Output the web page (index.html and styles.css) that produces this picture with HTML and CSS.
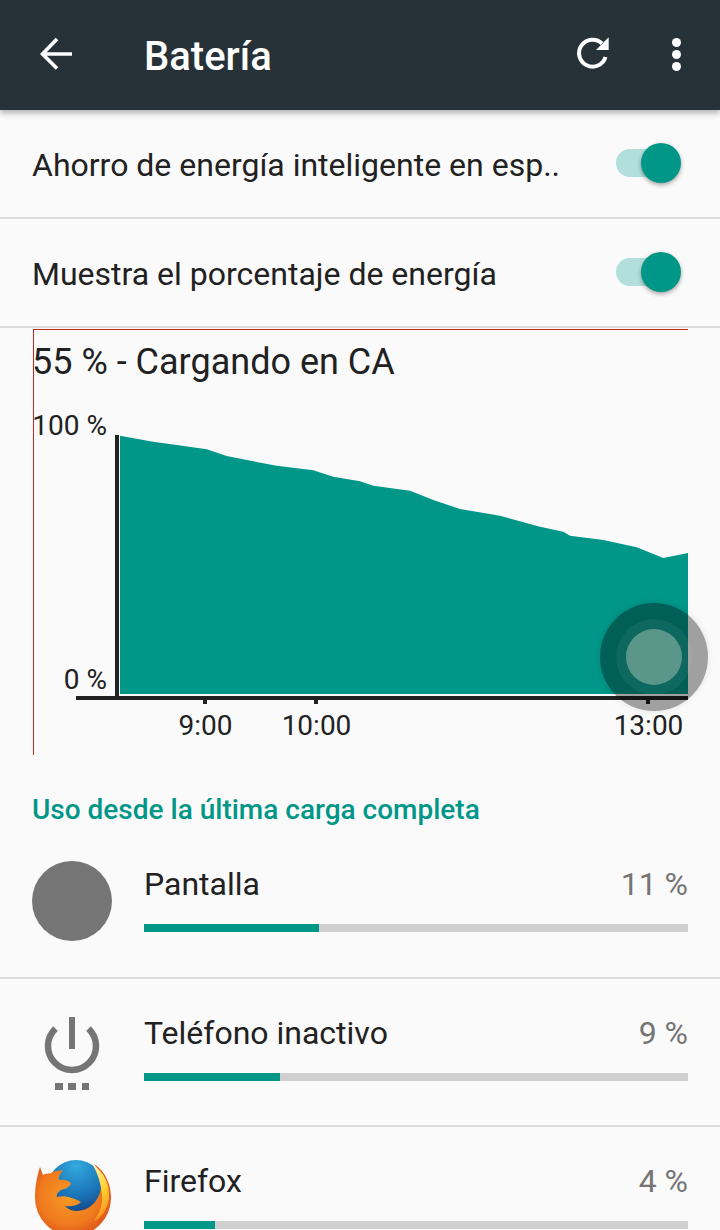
FILE: index.html
```html
<!DOCTYPE html>
<html lang="es">
<head>
    <meta charset="UTF-8" />
    <title>Batería</title>
    <link rel="stylesheet" href="styles.css">
</head>
<body>
    <header class="toolbar">
        <svg class="back-icon" viewBox="0 0 36 36"><path d="M33 18H4M18 3 3.500 18 18 32.500" fill="none" stroke="#fff" stroke-width="3.600"/></svg>
        <h1 class="toolbar-title">Batería</h1>
        <svg class="refresh-icon" viewBox="0 0 36 36"><path d="M27 7.500A13.500 13.500 0 1 0 30.500 21" fill="none" stroke="#fff" stroke-width="4"/><path d="M21 14 33.700 14 33.700 1.300z" fill="#fff"/></svg>
        <div class="more-icon"><i></i><i></i><i></i></div>
    </header>

    <div class="setting-row">
        <span class="setting-label">Ahorro de energía inteligente en esp..</span>
        <div class="switch"><div class="switch-thumb"></div></div>
    </div>
    <div class="setting-row">
        <span class="setting-label">Muestra el porcentaje de energía</span>
        <div class="switch"><div class="switch-thumb"></div></div>
    </div>

    <section class="chart">
        <h2 class="chart-title">55 % - Cargando en CA</h2>
        <svg class="chart-plot" viewBox="0 0 654 360" width="654" height="360">
            <path class="plot-area" d="M86 36.700 L119 42.700 L142.700 46 L172.700 50.300 L192.700 57 L219.300 62.300 L242.700 66.700 L279.300 71.300 L299.300 77.700 L326 82.300 L339.300 86.700 L376 91.700 L399.300 101 L426 110 L466 116.700 L506 127.700 L529.300 132.700 L536 136.700 L569.300 141 L602.700 148.300 L629.300 159 L654 154 L654 295 L86 295 Z"/>
            <rect class="axis" x="81" y="36" width="4" height="263"/>
            <rect class="axis" x="42" y="297" width="612" height="4"/>
            <rect class="axis" x="169" y="300" width="4" height="5"/>
            <rect class="axis" x="280" y="300" width="4" height="5"/>
            <rect class="axis" x="612" y="300" width="4" height="5"/>
            <text class="plot-label" x="73" y="36" text-anchor="end">100 %</text>
            <text class="plot-label" x="73" y="290" text-anchor="end">0 %</text>
            <text class="plot-label" x="171.500" y="336" text-anchor="middle">9:00</text>
            <text class="plot-label" x="282.500" y="336" text-anchor="middle">10:00</text>
            <text class="plot-label" x="614.500" y="336" text-anchor="middle">13:00</text>
        </svg>
    </section>

    <h2 class="section-title">Uso desde la última carga completa</h2>

    <div class="usage-row">
        <div class="usage-icon"><div class="screen-dot"></div></div>
        <div class="usage-body">
            <div class="usage-head"><span class="usage-name">Pantalla</span><span class="usage-pct">11 %</span></div>
            <div class="bar"><div class="bar-fill" style="width: 32.2%"></div></div>
        </div>
    </div>
    <div class="usage-row">
        <div class="usage-icon">
            <svg viewBox="0 0 80 80" width="80" height="80">
                <path d="M23.500 18.600A24 24 0 1 0 56.500 18.600" fill="none" stroke="#757575" stroke-width="6.500"/>
                <rect x="37" y="7" width="6" height="32" fill="#757575"/>
                <rect x="23" y="73" width="8" height="7" fill="#757575"/>
                <rect x="36" y="73" width="8" height="7" fill="#757575"/>
                <rect x="50" y="73" width="7" height="7" fill="#757575"/>
            </svg>
        </div>
        <div class="usage-body">
            <div class="usage-head"><span class="usage-name">Teléfono inactivo</span><span class="usage-pct">9 %</span></div>
            <div class="bar"><div class="bar-fill" style="width: 25%"></div></div>
        </div>
    </div>
    <div class="usage-row">
        <div class="usage-icon">
            <svg class="firefox-icon" viewBox="0 0 80 80" width="80" height="80">
                <defs>
                    <radialGradient id="globe" cx="0.5" cy="0.1" r="0.95">
                        <stop offset="0" stop-color="#33a9df"/>
                        <stop offset="0.55" stop-color="#1a74b6"/>
                        <stop offset="1" stop-color="#12306f"/>
                    </radialGradient>
                    <radialGradient id="fox" cx="0.45" cy="0.45" r="0.65">
                        <stop offset="0" stop-color="#f79a24"/>
                        <stop offset="0.6" stop-color="#f07a1e"/>
                        <stop offset="1" stop-color="#d6461c"/>
                    </radialGradient>
                    <linearGradient id="flame" x1="0.3" y1="0" x2="0.6" y2="1">
                        <stop offset="0" stop-color="#fff3a0"/>
                        <stop offset="0.5" stop-color="#ffd02f"/>
                        <stop offset="1" stop-color="#f58a1f"/>
                    </linearGradient>
                </defs>
                <circle cx="44" cy="31" r="29" fill="url(#globe)"/>
                <path d="M8 9 L11 17 C14 15 17 16 19 15 C24 12 28 13 31 12 C29 15 26 18 27 22 C31 21 36 22 39 25 C38 29 33 31 29 32 C26 34 24 36 25 39 C32 37 42 40 49 44 C45 48 38 49 33 48 C40 56 55 54 63 44 C71 34 72 20 62 6 C74 14 79 27 79 40 A38 38 0 0 1 3 40 C3 28 5 18 8 9 Z" fill="url(#fox)"/>
                <path d="M61 7 C72 14 78 26 77 40 C76 50 71 58 62 63 C68 54 71 46 70 37 C69 26 66 16 61 7 Z" fill="url(#flame)"/>
            </svg>
        </div>
        <div class="usage-body">
            <div class="usage-head"><span class="usage-name">Firefox</span><span class="usage-pct">4 %</span></div>
            <div class="bar"><div class="bar-fill" style="width: 13%"></div></div>
        </div>
    </div>

    <div class="touch-button"><div class="touch-ring"><div class="touch-core"></div></div></div>
</body>
</html>
```

FILE: styles.css
```css
html, body { margin: 0; height: 1230px; overflow: hidden; }
body { position: relative; background-color: #fafafa; color: #212121; font-family: Roboto, "Noto Sans", sans-serif; }

.toolbar { display: flex; align-items: center; height: 110px; padding-left: 39px; background-color: #263238; box-shadow: 0 3px 6px rgba(0, 0, 0, 0.3); position: relative; }
.back-icon { width: 36px; height: 36px; margin-bottom: 2px; }
.toolbar-title { flex: 1; margin: 3px 0 0 69px; color: #fff; font-size: 40px; font-weight: 500; }
.refresh-icon { width: 36px; height: 36px; margin: 0 61px 2px 0; }
.more-icon { display: flex; flex-direction: column; gap: 3px; margin: 0 39px 2px 0; }
.more-icon i { width: 9px; height: 9px; border-radius: 50%; background-color: #fff; }

.setting-row { display: flex; align-items: center; justify-content: space-between; height: 107px; padding: 0 44px 0 32px; border-bottom: 2px solid #dcdcdc; }
.setting-label { margin-top: 2px; font-size: 32px; }
.switch { position: relative; width: 60px; height: 28px; margin-bottom: 2px; border-radius: 14px; background-color: #b2dfdb; }
.switch-thumb { position: absolute; top: -6px; right: -5px; width: 40px; height: 40px; border-radius: 50%; background-color: #009688; box-shadow: 0 2px 4px rgba(0, 0, 0, 0.35); }

.chart { height: 425px; margin: 1px 32px 0 33px; border-top: 1px solid #c62828; border-left: 1px solid #c62828; }
.chart-title { margin: 12px 0 0 -2px; font-size: 36px; font-weight: 400; line-height: 40px; }
.chart-plot { display: block; margin-top: 17px; overflow: visible; }
.plot-area { fill: #009688; }
.axis { fill: #212121; }
.plot-label { fill: #212121; font-size: 28px; }

.section-title { margin: 38px 0 0 32px; padding-bottom: 3px; color: #009688; font-size: 28px; font-weight: 500; line-height: 34px; }

.usage-row { display: flex; height: 146px; padding: 0 32px; border-bottom: 2px solid #dcdcdc; }
.section-title + .usage-row { height: 147px; }
.usage-icon { width: 80px; height: 80px; margin: 31px 32px 0 0; }
.screen-dot { width: 80px; height: 80px; border-radius: 50%; background-color: #757575; }
.usage-body { flex: 1; padding-top: 34px; }
.usage-head { display: flex; justify-content: space-between; align-items: center; height: 40px; }
.usage-name { font-size: 32px; }
.usage-pct { color: #757575; font-size: 32px; }
.bar { height: 8px; margin-top: 20px; background-color: #d0d0d0; }
.bar-fill { height: 100%; background-color: #009688; }

.touch-button { position: absolute; left: 600px; top: 603px; width: 108px; height: 108px; border-radius: 50%; background-color: rgba(0, 0, 0, 0.36); box-shadow: 0 0 6px rgba(0, 0, 0, 0.1); display: flex; align-items: center; justify-content: center; }
.touch-ring { width: 76px; height: 76px; border-radius: 50%; background-color: rgba(255, 255, 255, 0.05); display: flex; align-items: center; justify-content: center; }
.touch-core { width: 56px; height: 56px; border-radius: 50%; background-color: #5b968b; }
```
